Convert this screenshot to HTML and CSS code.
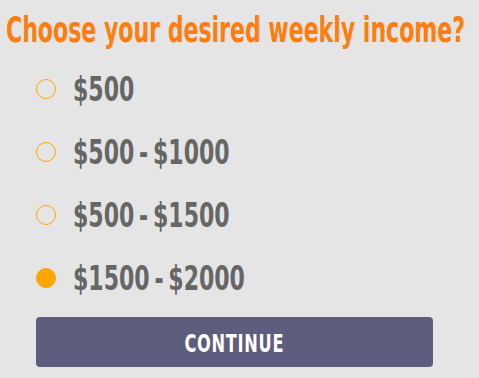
FILE: index.html
```html
<!DOCTYPE html>
<html>
<head>
<meta charset="utf-8">
<link rel="stylesheet" href="styles.css">
</head>
<body>
<div class="page">
  <h1 class="title"><span class="squeeze">Choose your desired weekly income?</span></h1>
  <ul class="options">
    <li class="option"><span class="radio"></span><span class="label">$500</span></li>
    <li class="option"><span class="radio"></span><span class="label">$500 - $1000</span></li>
    <li class="option"><span class="radio"></span><span class="label">$500 - $1500</span></li>
    <li class="option"><span class="radio checked"></span><span class="label">$1500 - $2000</span></li>
  </ul>
  <button class="continue"><span class="btn-text">CONTINUE</span></button>
</div>
</body>
</html>
```
FILE: styles.css
```css
html, body {
  margin: 0;
  padding: 0;
  background: #e5e5e5;
}
.page {
  width: 479px;
  height: 378px;
  padding: 10px 0 0 6px;
  box-sizing: border-box;
  font-family: "DejaVu Sans Condensed", "DejaVu Sans", sans-serif;
  font-stretch: condensed;
  overflow: hidden;
}
.title {
  margin: 0;
  font-size: 35px;
  font-weight: bold;
  color: #ff7d0f;
  line-height: 40px;
  white-space: nowrap;
}
.squeeze {
  display: inline-block;
  transform: scaleX(0.70);
  transform-origin: left center;
}
.options {
  list-style: none;
  margin: 0;
  padding: 0 0 0 30px;
  display: flex;
  flex-direction: column;
  gap: 23px;
  margin-top: 19px;
}
.option {
  display: flex;
  align-items: center;
  height: 40px;
  gap: 17px;
}
.radio {
  width: 20px;
  height: 20px;
  box-sizing: border-box;
  border: 1px solid #ffa500;
  border-radius: 50%;
}
.radio.checked {
  background: #ffa500;
}
.label {
  display: inline-block;
  font-size: 34px;
  font-weight: bold;
  color: #666;
  white-space: nowrap;
  word-spacing: -4px;
  transform: scaleX(0.72);
  transform-origin: left center;
}
.continue {
  display: flex;
  align-items: center;
  justify-content: center;
  margin: 19px 0 0 30px;
  width: 397px;
  height: 50px;
  border: 0;
  border-radius: 4px;
  background: #5d5d7d;
  color: #fff;
  font-family: inherit;
  padding: 0;
}
.btn-text {
  display: inline-block;
  font-size: 25px;
  font-weight: bold;
  letter-spacing: 1px;
  transform: scaleX(0.72);
  margin-top: 2px;
}
```
